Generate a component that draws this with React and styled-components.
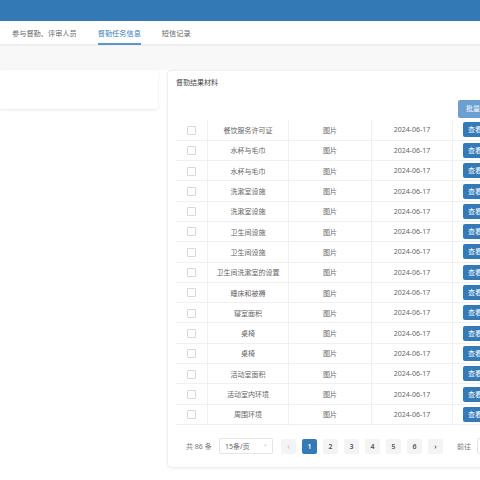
import React from "react";
import styled, { createGlobalStyle } from "styled-components";

const GlobalStyle = createGlobalStyle`
  html, body {
    margin: 0;
    padding: 0;
    background: #fff;
    overflow: hidden;
  }
  body {
    font-family: "Noto Sans", "Noto Sans CJK SC", sans-serif;
    color: #606266;
  }
`;

const rows = [
  "餐饮服务许可证",
  "水杯与毛巾",
  "水杯与毛巾",
  "洗漱室设施",
  "洗漱室设施",
  "卫生间设施",
  "卫生间设施",
  "卫生间洗漱室的设置",
  "睡床和被褥",
  "寝室面积",
  "桌椅",
  "桌椅",
  "活动室面积",
  "活动室内环境",
  "周围环境",
];

const pages = ["1", "2", "3", "4", "5", "6"];

const App = () => {
  return (
    <Page>
      <GlobalStyle />
      <Header />
      <Tabs>
        <Tab>参与督勤、评审人员</Tab>
        <Tab active>督勤任务信息</Tab>
        <Tab>短信记录</Tab>
      </Tabs>
      <Strip />
      <Main>
        <LeftCard />
        <Card>
          <CardTitle>督勤结果材料</CardTitle>
          <Toolbar>
            <BatchButton>批量下载</BatchButton>
          </Toolbar>
          <Table>
            <tbody>
              {rows.map((name, i) => (
                <tr key={i}>
                  <CheckCell>
                    <Check />
                  </CheckCell>
                  <Cell w={80}>{name}</Cell>
                  <Cell w={82}>图片</Cell>
                  <Cell w={80}>2024-06-17</Cell>
                  <ActionCell>
                    <ViewButton>查看</ViewButton>
                  </ActionCell>
                </tr>
              ))}
            </tbody>
          </Table>
          <Pager>
            <Total>共 86 条</Total>
            <SizeSelect>
              <span>15条/页</span>
              <Caret>⌄</Caret>
            </SizeSelect>
            <PageList>
              <PageBtn disabled>‹</PageBtn>
              {pages.map(p => (
                <PageBtn key={p} active={p === "1"}>
                  {p}
                </PageBtn>
              ))}
              <PageBtn>›</PageBtn>
            </PageList>
            <Jump>前往</Jump>
            <JumpInput />
          </Pager>
        </Card>
      </Main>
    </Page>
  );
};

export default App;

const Page = styled.div`
  width: 560px;
  height: 480px;
  background: #fff;
`;

const Header = styled.div`
  height: 21px;
  background: #3379b6;
`;

const Tabs = styled.div`
  display: flex;
  align-items: stretch;
  height: 23px;
  padding-left: 12px;
  gap: 21px;
  border-bottom: 2px solid #eeeeee;
`;

const Tab = styled.div`
  display: flex;
  align-items: center;
  padding-top: 2px;
  font-size: 7.2px;
  color: ${p => (p.active ? "#3a7fc0" : "#666")};
  border-bottom: 2px solid ${p => (p.active ? "#5b95cc" : "transparent")};
  margin-bottom: -1px;
`;

const Strip = styled.div`
  height: 24px;
  background: #f8f8f8;
`;

const Main = styled.div`
  display: flex;
  align-items: flex-start;
  gap: 9px;
`;

const LeftCard = styled.div`
  width: 158px;
  height: 39px;
  background: #fff;
  border-radius: 0 3px 3px 0;
  box-shadow: 0 1px 3px rgba(0, 0, 0, 0.1);
`;

const Card = styled.div`
  flex: 1;
  height: 396px;
  padding: 0 0 0 8px;
  background: #fff;
  border: 1px solid #efefef;
  border-radius: 4px;
  box-shadow: 0 1px 3px rgba(0, 0, 0, 0.05);
`;

const CardTitle = styled.div`
  font-size: 7px;
  color: #444;
  padding-top: 6px;
  height: 20px;
`;

const Toolbar = styled.div`
  display: flex;
  justify-content: flex-start;
  padding-left: 282px;
  height: 21px;
  align-items: flex-end;
`;

const BatchButton = styled.div`
  width: 44px;
  height: 18px;
  line-height: 18px;
  padding-left: 8px;
  font-size: 7px;
  color: #fff;
  background: #6c9fd1;
  border-radius: 2px;
`;

const Table = styled.table`
  border-collapse: collapse;
  margin-top: 2px;
  font-size: 7px;
  color: #666;
  tr {
    height: 20.3px;
    border-bottom: 1px solid #f0f0f0;
  }
`;

const CheckCell = styled.td`
  width: 31px;
  padding: 0;
  text-align: center;
  border-right: 1px solid #f0f0f0;
`;

const Check = styled.span`
  display: inline-block;
  width: 7px;
  height: 7px;
  border: 1px solid #d8d8d8;
  border-radius: 1px;
  vertical-align: middle;
`;

const Cell = styled.td`
  width: ${p => p.w}px;
  padding: 0;
  text-align: center;
  white-space: nowrap;
  border-right: 1px solid #f0f0f0;
`;

const ActionCell = styled.td`
  padding: 0 0 0 10px;
  width: 60px;
`;

const ViewButton = styled.div`
  width: 30px;
  height: 15px;
  line-height: 15px;
  padding-left: 5px;
  font-size: 7px;
  color: #fff;
  background: #337ab7;
  border-radius: 2px;
`;

const Pager = styled.div`
  display: flex;
  align-items: center;
  height: 15px;
  margin-top: 14px;
  padding-left: 10px;
  font-size: 7px;
  color: #777;
`;

const Total = styled.span`
  width: 33px;
`;

const SizeSelect = styled.div`
  display: flex;
  align-items: center;
  justify-content: space-between;
  width: 43px;
  height: 14px;
  padding: 0 4px 0 5px;
  border: 1px solid #e4e4e4;
  border-radius: 2px;
  color: #666;
`;

const Caret = styled.span`
  font-size: 6px;
  color: #bbb;
  line-height: 1;
  margin-top: -4px;
`;

const PageList = styled.div`
  display: flex;
  gap: 6px;
  margin-left: 8px;
`;

const PageBtn = styled.div`
  width: 15px;
  height: 15px;
  line-height: 15px;
  text-align: center;
  font-size: 7px;
  font-weight: 600;
  border-radius: 2px;
  background: ${p => (p.active ? "#337ab7" : "#f4f4f5")};
  color: ${p => (p.active ? "#fff" : p.disabled ? "#c0c4cc" : "#555")};
`;

const Jump = styled.span`
  margin-left: 14px;
  color: #777;
`;

const JumpInput = styled.div`
  width: 30px;
  height: 14px;
  margin-left: 6px;
  border: 1px solid #e4e4e4;
  border-radius: 2px;
`;
